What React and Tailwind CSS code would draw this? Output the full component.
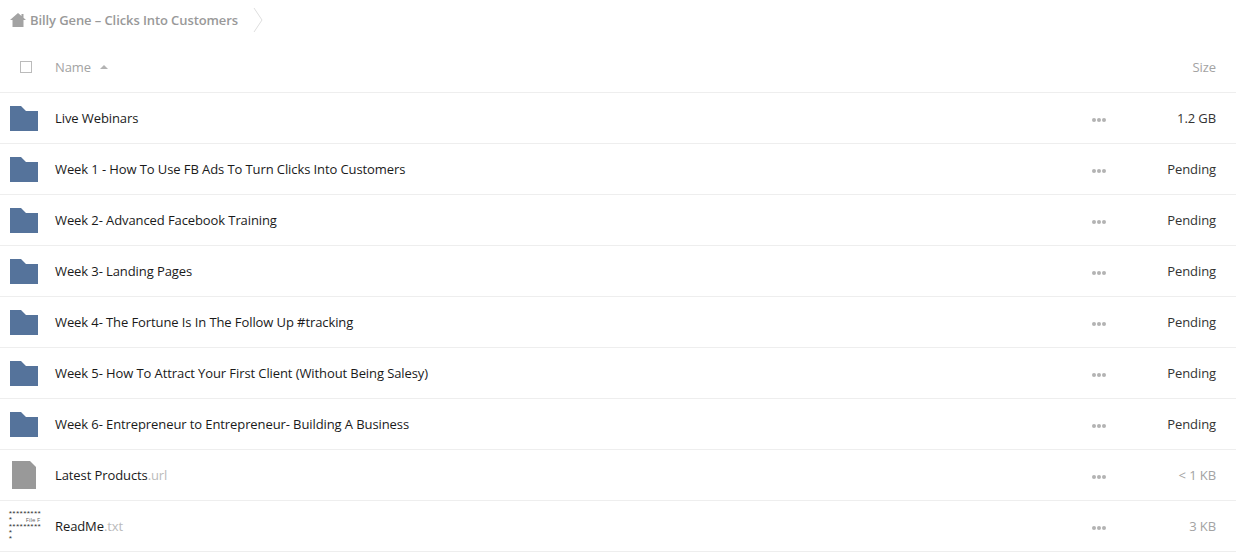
import React from 'react';

const rows = [
  { name: 'Live Webinars', size: '1.2 GB', type: 'folder' },
  { name: 'Week 1 - How To Use FB Ads To Turn Clicks Into Customers', size: 'Pending', type: 'folder' },
  { name: 'Week 2- Advanced Facebook Training', size: 'Pending', type: 'folder' },
  { name: 'Week 3- Landing Pages', size: 'Pending', type: 'folder' },
  { name: 'Week 4- The Fortune Is In The Follow Up #tracking', size: 'Pending', type: 'folder' },
  { name: 'Week 5- How To Attract Your First Client (Without Being Salesy)', size: 'Pending', type: 'folder' },
  { name: 'Week 6- Entrepreneur to Entrepreneur- Building A Business', size: 'Pending', type: 'folder' },
  { name: 'Latest Products', ext: '.url', size: '< 1 KB', type: 'file', muted: true },
  { name: 'ReadMe', ext: '.txt', size: '3 KB', type: 'text', muted: true },
];

function FolderIcon() {
  return (
    <svg width="28" height="25" viewBox="0 0 28 25">
      <path d="M0 0H11L16 5H28V25H0Z" fill="#55739b" />
    </svg>
  );
}

function FileIcon() {
  return (
    <svg width="24" height="28" viewBox="0 0 24 28">
      <path d="M0 0H18L24 6V28H0Z" fill="#999999" />
    </svg>
  );
}

// tiny preview of the txt file
function TextThumb() {
  return (
    <div className="w-[32px] h-[30px] font-['Liberation_Mono',monospace] text-[8px] leading-[6.3px] tracking-[-1.2px] text-[#333] whitespace-pre">
      <div>*********</div>
      <div className="flex justify-between">
        <span>*</span>
        <span className="font-['Open_Sans',sans-serif] text-[6px] tracking-normal text-[#666]">File F</span>
      </div>
      <div>*********</div>
      <div>*</div>
      <div>*</div>
    </div>
  );
}

function MoreDots() {
  return (
    <div className="flex gap-[1px]">
      <span className="w-[4px] h-[4px] rounded-full bg-[#b3b3b3]" />
      <span className="w-[4px] h-[4px] rounded-full bg-[#b3b3b3]" />
      <span className="w-[4px] h-[4px] rounded-full bg-[#b3b3b3]" />
    </div>
  );
}

export default function App() {
  return (
    <div className="w-[1236px] h-[553px] bg-white overflow-hidden font-['Open_Sans',sans-serif] text-[13px] tracking-[-0.095px]">
      {/* Breadcrumb */}
      <div className="h-[42px] flex items-center pl-[10px]">
        <svg width="16" height="14" viewBox="0 0 16 14" className="mb-[2px]">
          <path d="M8 0L11.5 3V1H13.5V4.8L16 7H13.5V14H2.5V7H0Z" fill="#a3a3a3" />
        </svg>
        <span className="ml-[4px] mb-[1px] font-semibold text-[#999]">Billy Gene – Clicks Into Customers</span>
        <svg width="10" height="26" viewBox="0 0 10 26" className="ml-[15px] mb-[2px]">
          <path d="M1 1L9 13L1 25" fill="none" stroke="#dedede" />
        </svg>
      </div>

      {/* Header */}
      <div className="h-[51px] flex items-center border-b border-[#eeeeee] pr-[20px]">
        <div className="w-[55px] pl-[20px] flex">
          <span className="w-[12px] h-[12px] border border-[#bbbbbb]" />
        </div>
        <span className="mt-[2px] text-[#a3a3a3]">Name</span>
        <svg width="8" height="4" viewBox="0 0 8 4" className="ml-[9px]">
          <path d="M4 0L8 4H0Z" fill="#b3b3b3" />
        </svg>
        <span className="ml-auto mt-[2px] text-[#a3a3a3]">Size</span>
      </div>

      {/* Rows */}
      {rows.map((row) => (
        <div key={row.name} className="h-[51px] flex items-center border-b border-[#eeeeee] pr-[20px]">
          <div className="w-[55px] flex items-center">
            {row.type === 'folder' && <div className="ml-[10px] flex"><FolderIcon /></div>}
            {row.type === 'file' && <div className="ml-[12px] flex"><FileIcon /></div>}
            {row.type === 'text' && <div className="ml-[8px] flex"><TextThumb /></div>}
          </div>
          <span className="mt-[2px] text-[#1a1a1a]">
            {row.name}
            {row.ext && <span className="text-[#bbbbbb]">{row.ext}</span>}
          </span>
          <div className="ml-auto flex items-center">
            <div className="mt-[3px]"><MoreDots /></div>
            <span className={`mt-[2px] w-[110px] text-right ${row.muted ? 'text-[#a3a3a3]' : 'text-[#333333]'}`}>{row.size}</span>
          </div>
        </div>
      ))}
    </div>
  );
}
